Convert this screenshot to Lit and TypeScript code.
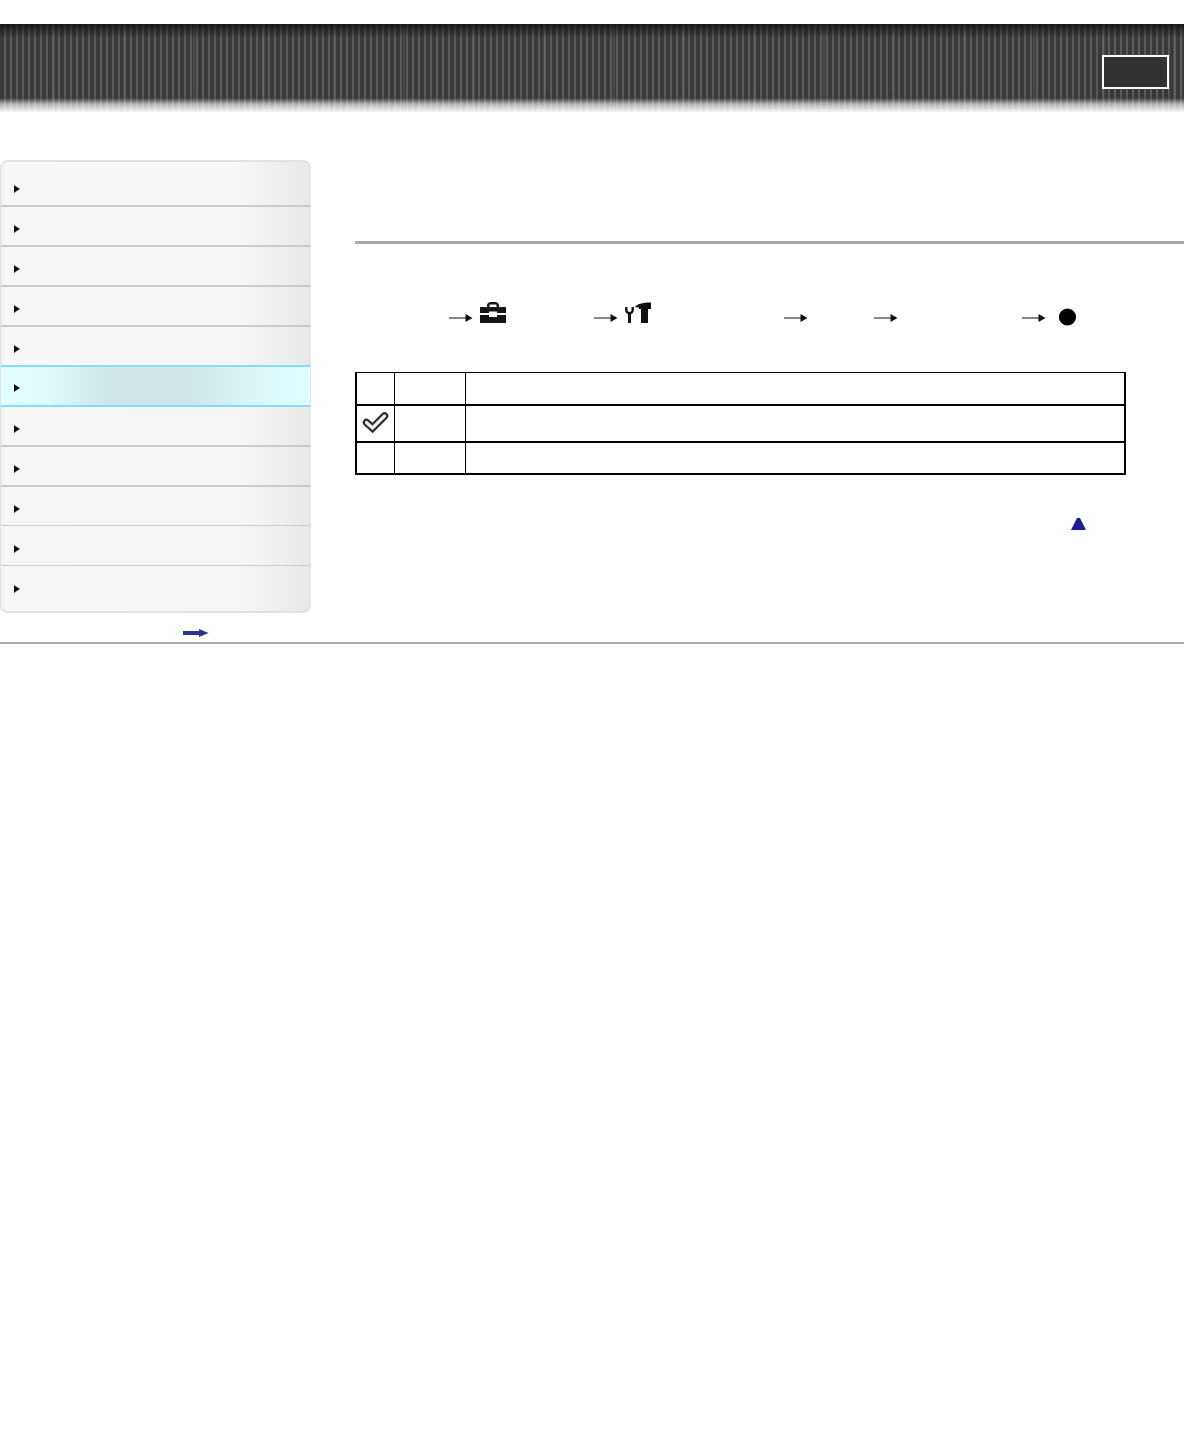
import { LitElement, html, css } from "lit";
import { customElement } from "lit/decorators.js";

const arrow = html`<svg class="arrow" width="24" height="10" viewBox="0 0 24 10"><path d="M0 5H17" stroke="#666" stroke-width="1.6"/><path d="M16.500 1L23.500 5L16.500 9Z" fill="#111"/></svg>`;
const ROWS = 11;

@customElement("app-root")
export class AppRoot extends LitElement {
  static styles = css`
    :host { display: block; width: 1184px; height: 1440px; background: #fff; font-family: "Liberation Sans", sans-serif; overflow: hidden; }
    .banner {
      margin-top: 24px; height: 88px; display: flex; justify-content: flex-end; align-items: flex-start;
      background:
        linear-gradient(to bottom, rgba(15,15,15,.8) 0, rgba(20,20,20,0) 14px, rgba(0,0,0,0) 70px, rgba(50,50,50,.2) 74px, rgba(255,255,255,.6) 80px, rgba(255,255,255,.92) 87px),
        repeating-linear-gradient(to right, transparent 0 53px, rgba(255,255,255,.08) 53px 55px, transparent 55px 70px),
        repeating-linear-gradient(to right, #3a3a3a 0 4px, #5a5a5a 4px 6px);
    }
    .btn { width: 67px; height: 34px; box-sizing: border-box; margin: 31px 15px 0 0; border: 2px solid #fff; background: #333; }
    .body { display: flex; align-items: flex-start; height: 532px; box-sizing: border-box; border-bottom: 2px solid #a9a9a9; }
    .side { width: 311px; margin-top: 48px; flex: none; display: flex; flex-direction: column; align-items: stretch; }
    .menu { height: 453px; box-sizing: border-box; border: 1px solid #e2e2e2; border-top-width: 2px; border-bottom-width: 2px; border-radius: 8px; overflow: hidden; display: flex; flex-direction: column;
      background: linear-gradient(to right, #f0f0f0 0, #f7f7f7 6px, #f6f6f6 76%, #e8e8e8 100%); }
    .row { height: 40px; flex: none; box-sizing: border-box; border-bottom: 2px solid #cdcdcd; display: flex; align-items: center; padding: 6px 0 0 13px; }
    .row.first { height: 45px; padding-top: 10px; }
    .row.r8 { height: 39px; border-bottom-width: 1px; }
    .row.r9 { border-bottom-width: 1px; padding-top: 7px; }
    .row.last { flex: 1; height: auto; border: 0; padding-top: 0; }
    .row.on { margin: -2px -1px 0; padding-top: 4px; height: 42px; border: 2px solid #7fe0fb; border-left-width: 1px; border-right-width: 1px;
      background: linear-gradient(to right, #e2fdff 0, #dff9fb 14%, #cfe5e8 36%, #cfe5e8 60%, #dcf6f8 84%, #e0fdff 100%); }
    .tri { width: 6px; height: 8px; display: block; }
    .more { display: flex; justify-content: flex-end; padding: 15px 102px 0 0; }
    .more svg, .top svg { display: block; filter: blur(.3px); }
    main { flex: 1; padding-left: 44px; min-width: 0; }
    .rule { height: 3px; background: #a9a9a9; margin-top: 129px; }
    .path { height: 26px; margin-top: 60px; display: flex; align-items: center; }
    .path > * { flex: none; }
    .path .arrow { margin-top: 1px; }
    .gap { display: block; }
    .g1 { width: 94px; } .g2 { width: 88px; } .g3 { width: 132px; } .g4 { width: 66px; } .g5 { width: 124px; }
    .ico { margin: -9px 0 0 7px; filter: blur(.3px); }
    .dot { margin: 0 0 0 13px; filter: blur(.2px); }
    table { border-collapse: collapse; width: 771px; margin-top: 42px; table-layout: fixed; }
    td { border-style: solid; border-color: #000; border-width: 2px 1px; padding: 0; height: 31px; }
    tr.head td { border-top-width: 1px; height: 31px; }
    tr.mid td { height: 35px; }
    tr.end td { height: 30px; }
    td.a { width: 37px; border-left-width: 2px; }
    td.b { width: 70px; }
    td.c { border-right-width: 2px; }
    td svg { display: block; margin: -3px 0 0 5px; filter: blur(.35px); }
    .top { display: flex; justify-content: flex-end; padding: 43px 98px 0 0; }
  `;

  render() {
    const rows = [];
    for (let i = 0; i < ROWS; i++) {
      const cls = ["row", i === 0 ? "first" : "", i === 5 ? "on" : "", i === 8 ? "r8" : "", i === 9 ? "r9" : "", i === 10 ? "last" : ""].join(" ");
      rows.push(html`<div class=${cls}><svg class="tri" viewBox="0 0 6 8"><path d="M0 0L2 1.500L6 4L2 6.500L0 8Z" fill="#111"/></svg></div>`);
    }
    return html`
      <div class="banner"><div class="btn"></div></div>
      <div class="body">
        <aside class="side">
          <nav class="menu">${rows}</nav>
          <div class="more">
            <svg width="26" height="10" viewBox="0 0 26 10"><path d="M0 3H16V1L25.500 5L16 9V7H0Z" fill="#2e3192"/></svg>
          </div>
        </aside>
        <main>
          <div class="rule"></div>
          <div class="path">
            <span class="gap g1"></span>
            ${arrow}
            <svg class="ico" width="26" height="22" viewBox="0 0 26 22"><path fill-rule="evenodd" fill="#151515" d="M7 5V3C7 1.500 9 0 10.500 0H15.500C17 0 19 1.500 19 3V5H26V11H17V9.500H9V11H0V5ZM9.500 5H16.500V3C16.500 2.500 16 2.500 15.500 2.500H10.500C10 2.500 9.500 2.500 9.500 3ZM0 13H9V15H17V13H26V21H0Z"/></svg>
            <span class="gap g2"></span>
            ${arrow}
            <svg class="ico" width="27" height="22" viewBox="0 0 27 22"><path fill="#111" d="M10 5C12 2 17 0.500 26 0.500V7H23V21H16V7H14V5.500C12.500 5.500 11 5.500 10 5Z"/><path fill="none" stroke="#111" stroke-width="3" d="M4.500 21V11.500"/><path fill="none" stroke="#111" stroke-width="2.400" d="M1.300 5V8C1.300 10 3 11.300 4.500 11.300C6 11.300 7.700 10 7.700 8V5"/></svg>
            <span class="gap g3"></span>
            ${arrow}
            <span class="gap g4"></span>
            ${arrow}
            <span class="gap g5"></span>
            ${arrow}
            <svg class="dot" width="18" height="18" viewBox="0 0 18 18"><circle cx="8.500" cy="9" r="8.600" fill="#000"/></svg>
          </div>
          <table>
            <tr class="head"><td class="a"></td><td class="b"></td><td class="c"></td></tr>
            <tr class="mid"><td class="a">
              <svg width="27" height="22" viewBox="0 0 27 22"><path d="M4.500 11.500L10.500 17L22.500 5" fill="none" stroke="#2a2a2a" stroke-width="7.500" stroke-linecap="round" stroke-linejoin="miter"/><path d="M4.500 11.500L10.500 17L22.500 5" fill="none" stroke="#eee" stroke-width="3.200" stroke-linecap="round" stroke-linejoin="miter"/></svg>
            </td><td class="b"></td><td class="c"></td></tr>
            <tr class="end"><td class="a"></td><td class="b"></td><td class="c"></td></tr>
          </table>
          <div class="top">
            <svg width="15" height="12" viewBox="0 0 15 12"><path d="M6 0H9L15 12H0Z" fill="#1b1f8f"/></svg>
          </div>
        </main>
      </div>
    `;
  }
}
